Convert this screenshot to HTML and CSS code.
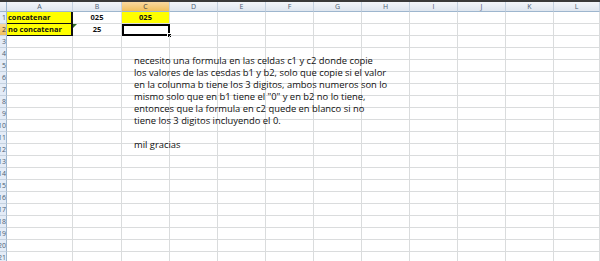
FILE: index.html
```html
<!DOCTYPE html>
<html lang="es">
<head>
  <meta charset="UTF-8" />
  <title>Libro1</title>
  <link rel="stylesheet" href="styles.css">
</head>
<body>
  <div class="topbar"></div>
  <div class="sheet" id="sheet">
    <div class="corner"></div>
    <div class="colhead">A</div>
    <div class="colhead">B</div>
    <div class="colhead active">C</div>
    <div class="colhead">D</div>
    <div class="colhead">E</div>
    <div class="colhead">F</div>
    <div class="colhead">G</div>
    <div class="colhead">H</div>
    <div class="colhead">I</div>
    <div class="colhead">J</div>
    <div class="colhead">K</div>
    <div class="colhead">L</div>

    <div class="rowhead"><span>1</span></div>
    <div class="cell yellow boxed left">concatenar</div>
    <div class="cell center">025</div>
    <div class="cell yellow center">025</div>
    <div class="cell"></div><div class="cell"></div><div class="cell"></div>
    <div class="cell"></div><div class="cell"></div><div class="cell"></div>
    <div class="cell"></div><div class="cell"></div><div class="cell"></div>

    <div class="rowhead active"><span>2</span></div>
    <div class="cell yellow boxed left">no concatenar</div>
    <div class="cell center flagged">25</div>
    <div class="cell selected"></div>
    <div class="cell"></div><div class="cell"></div><div class="cell"></div>
    <div class="cell"></div><div class="cell"></div><div class="cell"></div>
    <div class="cell"></div><div class="cell"></div><div class="cell"></div>
  </div>

  <div class="note">
    <p>necesito una formula en las celdas c1 y c2 donde copie<br>
    los valores de las cesdas b1 y b2, solo que copie si el valor<br>
    en la colunma b tiene los 3 digitos, ambos numeros son lo<br>
    mismo solo que en b1 tiene el "0" y en b2 no lo tiene,<br>
    entonces que la formula en c2 quede en blanco si no<br>
    tiene los 3 digitos incluyendo el 0.</p>
    <p>mil gracias</p>
  </div>

  <script>
    // filas vacías 3 a 21
    const sheet = document.getElementById('sheet');
    for (let r = 3; r <= 21; r++) {
      const h = document.createElement('div');
      h.className = 'rowhead';
      h.innerHTML = '<span>' + r + '</span>';
      sheet.appendChild(h);
      for (let c = 0; c < 12; c++) {
        const d = document.createElement('div');
        d.className = 'cell';
        sheet.appendChild(d);
      }
    }
  </script>
</body>
</html>
```

FILE: styles.css
```css
body {
  margin: 0;
  background: #fff;
  font-family: "Open Sans", "Liberation Sans", sans-serif;
  overflow: hidden;
}
.topbar {
  height: 2px;
  background: #3a3a3a;
}
.sheet {
  display: grid;
  grid-template-columns: 7px 66px 49px 48px repeat(8, 48px) 1fr;
  grid-template-rows: 10px;
  grid-auto-rows: 12px;
  width: 600px;
}
.corner,
.colhead,
.rowhead {
  box-sizing: border-box;
  background: linear-gradient(#f3f6fa, #dfe6ef);
  color: #4c5e74;
  font-size: 7px;
  line-height: 9px;
}
.corner {
  border-right: 1px solid #9eb6ce;
  border-bottom: 1px solid #9eb6ce;
}
.colhead {
  text-align: center;
  border-right: 1px solid #c5d2e0;
  border-bottom: 1px solid #9eb6ce;
}
.rowhead {
  display: flex;
  justify-content: flex-end;
  align-items: center;
  overflow: hidden;
  background: #e4ecf7;
  border-right: 1px solid #9eb6ce;
  border-bottom: 1px solid #c5d2e0;
}
.colhead.active,
.rowhead.active {
  background: linear-gradient(#f9d9a0, #f1c05c);
  color: #3c3c3c;
}
.cell {
  box-sizing: border-box;
  position: relative;
  border-right: 1px solid #dadcdd;
  border-bottom: 1px solid #dadcdd;
  font-size: 7.5px;
  font-weight: bold;
  line-height: 11px;
  color: #111;
  white-space: nowrap;
}
.left {
  padding-left: 1px;
}
.center {
  text-align: center;
}
.yellow {
  background: #ffff00;
}
.boxed {
  border-right: 2px solid #111;
  border-bottom: 1px solid #111;
}
.flagged::before {
  content: "";
  position: absolute;
  left: 0;
  top: 0;
  border-top: 4px solid #2f6d2a;
  border-right: 4px solid transparent;
}
.selected {
  border: 2px solid #000;
}
.selected::after {
  content: "";
  position: absolute;
  right: -4px;
  bottom: -4px;
  width: 3px;
  height: 3px;
  background: #000;
  border: 1px solid #fff;
}
.note {
  position: absolute;
  left: 134px;
  top: 55px;
  font-size: 9.4px;
  line-height: 12px;
  color: #111;
}
.note p {
  margin: 0 0 12px;
}
```
